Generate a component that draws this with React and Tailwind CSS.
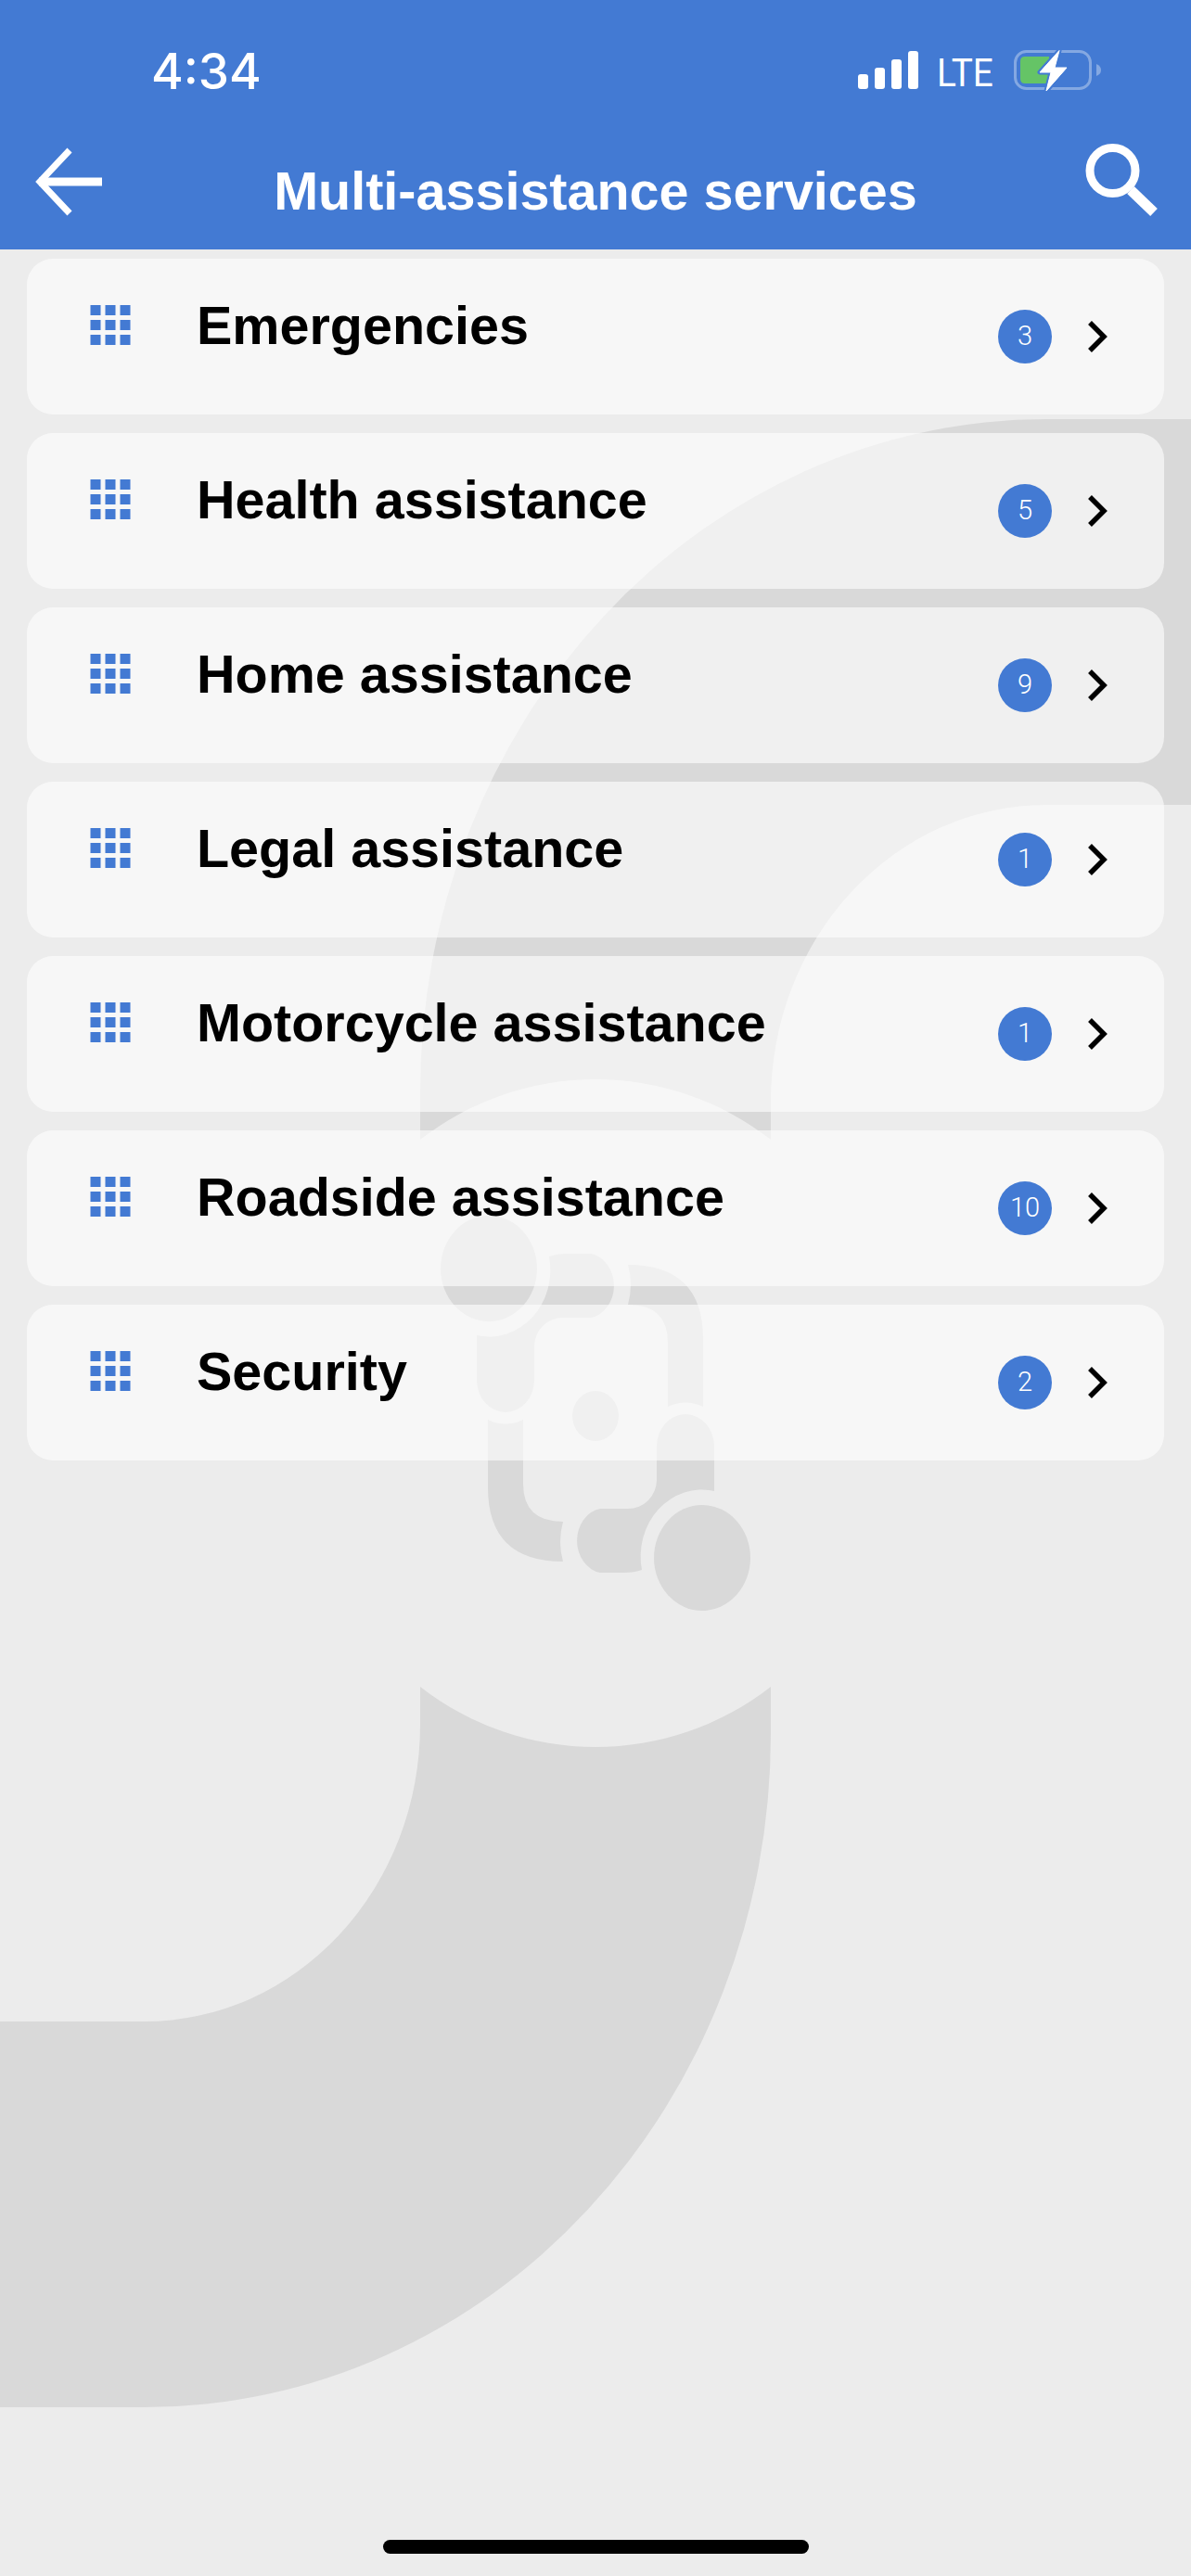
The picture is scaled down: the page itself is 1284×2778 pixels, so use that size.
import React from 'react';

const services = [
  { name: 'Emergencies', count: 3 },
  { name: 'Health assistance', count: 5 },
  { name: 'Home assistance', count: 9 },
  { name: 'Legal assistance', count: 1 },
  { name: 'Motorcycle assistance', count: 1 },
  { name: 'Roadside assistance', count: 10 },
  { name: 'Security', count: 2 },
];

// watermark logo behind the list, the two halves are the same shape turned 180deg
function Watermark() {
  const half = (
    <>
      <path d="M453 1819 A 307 307 0 0 0 831 1819 V1870 A 675 726 0 0 1 156 2596 H0 V2180 H156 A 297 320 0 0 0 453 1860 Z" />
      <ellipse cx="527" cy="1368" rx="52" ry="57" />
      <path d="M514 1440 V1488 A 31 35 0 0 0 576 1488 V1452 A 31 31 0 0 1 607 1421 H637 A 30 35 0 0 0 637 1352 H612 Q 600 1352 592 1355 A 66 72 0 0 1 514 1440 Z" />
      <path d="M677 1364 Q 758 1364 758 1444 V1517 Q 739 1508 720 1517 V1448 Q 720 1407 677 1407 Q 683 1385 677 1364 Z" />
    </>
  );
  return (
    <svg className="absolute inset-0" width="1284" height="2778" viewBox="0 0 1284 2778" fill="#d9d9d9">
      {half}
      <g transform="rotate(180 642 1524)">{half}</g>
      <ellipse cx="642" cy="1527" rx="25" ry="27" />
    </svg>
  );
}

function StatusBar() {
  return (
    <div className="h-[140px] flex items-start justify-between pl-[163px] pr-[97px] text-white">
      <span className="mt-[47px] text-[53px] leading-[60px] font-medium font-['Inter']">4:34</span>
      <div className="flex items-start mt-[54px]">
        <svg width="66" height="42" viewBox="0 0 66 42" fill="#fff">
          <rect x="0" y="26" width="11" height="16" rx="3" />
          <rect x="18" y="19" width="11" height="23" rx="3" />
          <rect x="36" y="10" width="11" height="32" rx="3" />
          <rect x="54" y="1" width="11" height="41" rx="3" />
        </svg>
        <span className="ml-[19px] w-[64px] mt-[1px] text-[43px] leading-[46px] font-['Roboto'] origin-left scale-x-[0.9]">LTE</span>
        <svg className="ml-[19px]" width="94" height="46" viewBox="0 0 94 46">
          <rect x="1.5" y="1.5" width="81" height="40" rx="12" fill="none" stroke="#fff" strokeOpacity="0.35" strokeWidth="3" />
          <path d="M89 15 Q 94 17 94 21.5 Q 94 26 89 28 Z" fill="#fff" fillOpacity="0.35" />
          <path d="M12 7 H38 V36 H12 Q 7 36 7 31 V12 Q 7 7 12 7 Z" fill="#65c466" />
          <path d="M49 0.5 L28 24 H40 L35 44 L57 19 H44 Z" fill="#fff" stroke="#437ad3" strokeWidth="5" paintOrder="stroke" strokeLinejoin="round" />
          <path d="M49 0.5 L28 24 H40 L35 44 L57 19 H44 Z" fill="#fff" stroke="#fff" strokeWidth="1" strokeLinejoin="round" />
        </svg>
      </div>
    </div>
  );
}

function NavBar() {
  return (
    <div className="flex items-start h-[129px]">
      <div className="w-[120px] pl-[34px] mt-[16px]">
        <svg width="80" height="80" viewBox="0 0 80 80" fill="none" stroke="#fff" strokeWidth="7">
          <path d="M76 40 H8" strokeWidth="9" />
          <path d="M41 6 L9 40 L41 74" />
        </svg>
      </div>
      <h1 className="flex-1 mt-[32px] text-center text-white text-[57.5px] leading-[68px] font-bold">Multi-assistance services</h1>
      <div className="w-[120px] mt-[10px]">
        <svg width="84" height="84" viewBox="0 0 84 84" fill="none" stroke="#fff">
          <circle cx="35.5" cy="34" r="24.5" strokeWidth="9" />
          <path d="M55 55 L80 79" strokeWidth="11" />
        </svg>
      </div>
    </div>
  );
}

function GridIcon() {
  const pos = [0.5, 16.5, 32.5];
  return (
    <svg width="44" height="43" viewBox="0 0 44 43" fill="#437ad3">
      {pos.map((y) => pos.map((x) => <rect key={`${x}-${y}`} x={x} y={y - 0.5} width="11" height="11" />))}
    </svg>
  );
}

function ServiceRow({ name, count }) {
  return (
    <div className="flex items-center h-[168px] rounded-[28px] bg-white/60 pl-[68px] pr-[60px]">
      <div className="self-start mt-[50px]">
        <GridIcon />
      </div>
      <div className="flex-1 self-start ml-[71px] mt-[38px] text-black text-[57.5px] leading-[68px] font-bold">{name}</div>
      <div className={`flex items-center justify-center w-[58px] h-[58px] rounded-full bg-[#437ad3] text-white text-[29px] font-[350] font-['Roboto'] ${count > 9 ? 'mr-[2px]' : ''}`}>{count}</div>
      <svg className={count > 9 ? 'ml-[36px]' : 'ml-[38px]'} width="23" height="36" viewBox="0 0 23 36" fill="none" stroke="#000" strokeWidth="5.5">
        <path d="M3 3 L18 18 L3 33" />
      </svg>
    </div>
  );
}

export default function App() {
  return (
    <div className="relative flex flex-col w-[1284px] h-[2778px] overflow-hidden bg-[#ececec] font-['Liberation_Sans',Arial,sans-serif]">
      <Watermark />
      <header className="relative bg-[#437ad3] h-[269px]">
        <StatusBar />
        <NavBar />
      </header>
      <main className="relative flex flex-col gap-[20px] pt-[10px] px-[29px]">
        {services.map((s) => (
          <ServiceRow key={s.name} name={s.name} count={s.count} />
        ))}
      </main>
      <div className="relative mt-auto mb-[24px] mx-auto w-[459px] h-[15px] rounded-full bg-black" />
    </div>
  );
}
